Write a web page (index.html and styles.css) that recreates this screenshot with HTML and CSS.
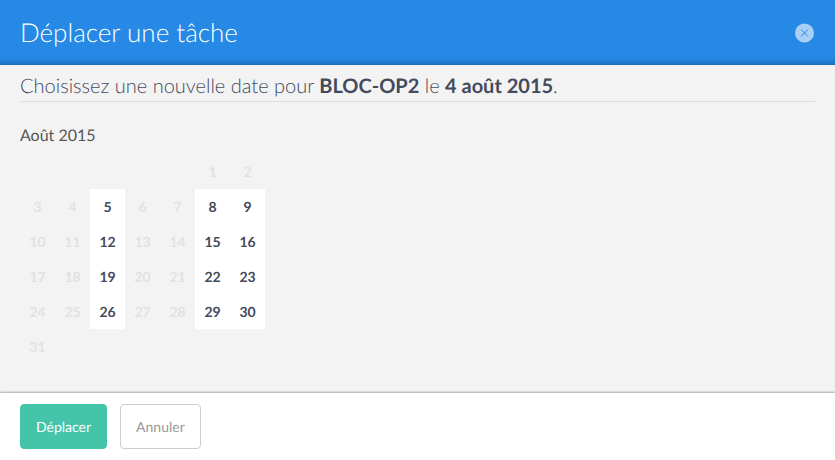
FILE: index.html
```html
<!DOCTYPE html>
<html lang="fr">
<head>
    <meta charset="UTF-8">
    <meta name="viewport" content="width=device-width, initial-scale=1.0">
    <title>Déplacer une tâche</title>
    <link rel="stylesheet" href="styles.css">
</head>
<body>
    <form class="modal">
        <header class="modal-header">
            <h1>Déplacer une tâche</h1>
            <button type="button" class="close-btn" aria-label="Fermer">
                <svg width="20" height="20" viewBox="0 0 20 20">
                    <circle cx="9.5" cy="10" r="9.5" fill="#a8cff5"/>
                    <path d="M6 6.5l7 7M13 6.5l-7 7" stroke="#2589e5" stroke-width="1"/>
                </svg>
            </button>
        </header>

        <main class="modal-body">
            <h2>Choisissez une nouvelle date pour <strong>BLOC-OP2</strong> le <strong>4 août 2015</strong>.</h2>

            <table class="calendar">
                <caption>Août 2015</caption>
                <tbody>
                    <tr><td></td><td></td><td></td><td></td><td></td><td>1</td><td>2</td></tr>
                    <tr>
                        <td>3</td><td>4</td><td><button type="button" class="day">5</button></td><td>6</td><td>7</td>
                        <td><button type="button" class="day">8</button></td><td><button type="button" class="day">9</button></td>
                    </tr>
                    <tr>
                        <td>10</td><td>11</td><td><button type="button" class="day">12</button></td><td>13</td><td>14</td>
                        <td><button type="button" class="day">15</button></td><td><button type="button" class="day">16</button></td>
                    </tr>
                    <tr>
                        <td>17</td><td>18</td><td><button type="button" class="day">19</button></td><td>20</td><td>21</td>
                        <td><button type="button" class="day">22</button></td><td><button type="button" class="day">23</button></td>
                    </tr>
                    <tr>
                        <td>24</td><td>25</td><td><button type="button" class="day">26</button></td><td>27</td><td>28</td>
                        <td><button type="button" class="day">29</button></td><td><button type="button" class="day">30</button></td>
                    </tr>
                    <tr><td>31</td><td></td><td></td><td></td><td></td><td></td><td></td></tr>
                </tbody>
            </table>
        </main>

        <footer class="modal-footer">
            <button type="submit" class="btn btn-primary">Déplacer</button>
            <button type="button" class="btn">Annuler</button>
        </footer>
    </form>
</body>
</html>
```
FILE: styles.css
```css
* {
    box-sizing: border-box;
}

body {
    margin: 0;
    font-family: Lato, sans-serif;
    text-rendering: geometricPrecision;
    color: #434a5b;
    background-color: #fff;
}

button {
    font-family: inherit;
    text-rendering: inherit;
    cursor: pointer;
}

.modal {
    display: flex;
    flex-direction: column;
    min-height: 100vh;
}

.modal-header {
    display: flex;
    justify-content: space-between;
    align-items: center;
    height: 65px;
    padding: 0 20px;
    background-color: #2589e5;
    box-shadow: inset 0 -8px 8px -8px rgba(0, 0, 0, 0.4);
}

h1 {
    margin: 0;
    padding-bottom: 2px;
    font-size: 26px;
    font-weight: 300;
    line-height: 32px;
    color: #fff;
}

.close-btn {
    display: block;
    padding: 0;
    border: none;
    background: none;
}

.close-btn svg {
    display: block;
}

.modal-body {
    flex: 1;
    padding: 7px 20px 28px;
    background-color: #f3f3f3;
}

h2 {
    margin: 0 0 24px;
    border-bottom: 1px solid #dedede;
    font-size: 20px;
    font-weight: 300;
    line-height: 29px;
}

h2 strong {
    font-weight: 700;
}

.calendar {
    border-collapse: collapse;
    table-layout: fixed;
    width: 245px;
}

.calendar caption {
    padding-bottom: 9px;
    font-size: 16px;
    line-height: 19px;
    text-align: left;
    color: #555;
}

.calendar td {
    width: 35px;
    height: 35px;
    padding: 0;
    font-size: 14px;
    font-weight: 700;
    text-align: center;
    color: #e2e2e2;
}

.day {
    display: block;
    width: 100%;
    height: 35px;
    padding: 0;
    border: none;
    font-size: 14px;
    font-weight: 700;
    color: #434a5b;
    background-color: #fff;
}

.day:hover {
    background-color: #e6f1fc;
}

.modal-footer {
    display: flex;
    gap: 13px;
    padding: 11px 20px;
    background-color: #fff;
    box-shadow: 0 -1px 2px rgba(0, 0, 0, 0.3);
}

.btn {
    height: 45px;
    padding: 0 15px;
    border: 1px solid #ccc;
    border-radius: 4px;
    font-size: 14px;
    color: #999;
    background-color: #fff;
}

.btn-primary {
    border-color: #44c4a8;
    color: #fff;
    background-color: #44c4a8;
}
```
